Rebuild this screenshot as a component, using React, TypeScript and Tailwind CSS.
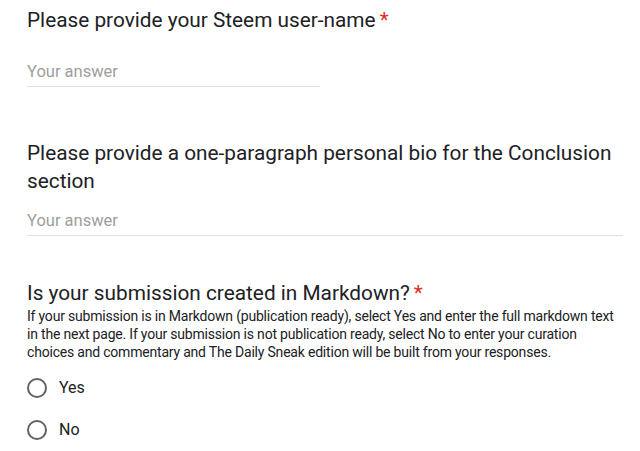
import React from "react";

function Required() {
  return <span className="text-[#d93025] ml-1">*</span>;
}

function AnswerField({ wide, className = "" }: { wide?: boolean; className?: string }) {
  return (
    <div
      className={
        "border-b border-[#e0e0e0] pb-[3px] text-[16.5px] leading-[22px] text-[#9e9e9e] " +
        (wide ? "w-[596px] " : "w-[293px] ") +
        className
      }
    >
      Your answer
    </div>
  );
}

function Radio({ label }: { label: string }) {
  return (
    <label className="flex items-center gap-[12px] h-[42px]">
      <span className="w-[20px] h-[20px] rounded-full border-2 border-[#5f6368]" />
      <span className="text-[16px] text-[#202124]">{label}</span>
    </label>
  );
}

export default function App() {
  return (
    <div
      className="w-[640px] h-[451px] bg-white overflow-hidden pl-[27px] pt-[6px]"
      style={{ fontFamily: "Roboto, 'Liberation Sans', sans-serif" }}
    >
      <section>
        <h2 className="text-[20.8px] leading-[28px] text-[#202124]">
          Please provide your Steem user-name
          <Required />
        </h2>
        <AnswerField className="mt-[27px]" />
      </section>

      <section className="mt-[52px]">
        <h2 className="text-[20.8px] leading-[28px] text-[#202124] w-[600px]">
          Please provide a one-paragraph personal bio for the Conclusion section
        </h2>
        <AnswerField wide className="mt-[15px]" />
      </section>

      <section className="mt-[43px]">
        <h2 className="text-[20.8px] leading-[28px] text-[#202124]">
          Is your submission created in Markdown?
          <Required />
        </h2>
        <p className="text-[14px] leading-[18px] tracking-[-0.2px] text-[#202124] w-[592px]">
          If your submission is in Markdown (publication ready), select Yes and enter the full
          markdown text in the next page. If your submission is not publication ready, select No to
          enter your curation choices and commentary and The Daily Sneak edition will be built from
          your responses.
        </p>
        <div className="mt-[6px]">
          <Radio label="Yes" />
          <Radio label="No" />
        </div>
      </section>
    </div>
  );
}
